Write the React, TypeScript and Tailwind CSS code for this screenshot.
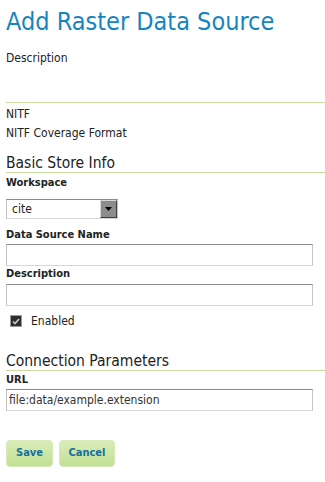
import React from "react";

const font = { fontFamily: '"DejaVu Sans Condensed", "DejaVu Sans", sans-serif' };

function Label({ children }: { children: React.ReactNode }) {
  return <div className="text-[11px] font-bold text-[#222] leading-[14px]">{children}</div>;
}

function TextInput({ value }: { value?: string }) {
  return (
    <div className="h-[22px] w-[307px] border border-t-[#8a8a8a] border-l-[#c4c4c4] border-r-[#c4c4c4] border-b-[#d6d6d6] bg-white px-[2px] flex items-center text-[12px] text-[#333]">
      {value}
    </div>
  );
}

function Section({ title }: { title: string }) {
  return (
    <div className="border-b border-[#c7dea0] text-[15.5px] leading-[18px] text-[#222]">{title}</div>
  );
}

export default function App() {
  return (
    <div className="w-[325px] h-[482px] bg-white overflow-hidden" style={font}>
      <div className="pl-[6px]">
        <h1 className="text-[25px] leading-[30px] text-[#1585bf] pt-[7px]">Add Raster Data Source</h1>
        <div className="text-[12px] leading-[14px] text-[#222] mt-[14px]">Description</div>
        <div className="mt-[37px] border-b border-[#c7dea0]" />
        <div className="mt-[2px] text-[12px] leading-[19px] text-[#222]">
          <div>NITF</div>
          <div>NITF Coverage Format</div>
        </div>
        <div className="mt-[11px]">
          <Section title="Basic Store Info" />
        </div>
        <div className="mt-[3px]">
          <Label>Workspace</Label>
        </div>
        <div className="mt-[9px] h-[20px] w-[112px] border border-t-[#8a8a8a] border-l-[#c4c4c4] border-r-[#c4c4c4] border-b-[#d6d6d6] bg-white flex items-center justify-between">
          <span className="pl-[5px] text-[12px] text-[#222]">cite</span>
          <span className="h-[18px] w-[17px] bg-[#8c8c8c] border border-t-[#d8d8d8] border-l-[#d8d8d8] border-r-[#404040] border-b-[#404040] flex items-center justify-center">
            <svg width="7" height="4" viewBox="0 0 7 4"><path d="M0 0h7L3.5 4z" fill="#000" /></svg>
          </span>
        </div>
        <div className="mt-[9px]">
          <Label>Data Source Name</Label>
        </div>
        <div className="mt-[2px]">
          <TextInput />
        </div>
        <div className="mt-[1px]">
          <Label>Description</Label>
        </div>
        <div className="mt-[3px]">
          <TextInput />
        </div>
        <div className="mt-[8px] h-[14px] flex items-center">
          <span className="ml-[4px] h-[12px] w-[12px] bg-[#2e2e2e] border border-[#9a9a9a] flex items-center justify-center">
            <svg width="8" height="7" viewBox="0 0 8 7"><path d="M1 3.5l2 2L7 1" stroke="#c8c8c8" strokeWidth="1.6" fill="none" /></svg>
          </span>
          <span className="ml-[9px] text-[12px] text-[#222]">Enabled</span>
        </div>
        <div className="mt-[24px]">
          <Section title="Connection Parameters" />
        </div>
        <div className="mt-[2px]">
          <Label>URL</Label>
        </div>
        <div className="mt-[2px]">
          <TextInput value="file:data/example.extension" />
        </div>
        <div className="mt-[29px] flex gap-[6px]">
          <button className="h-[27px] w-[47px] rounded-[4px] border border-[#d5e8b5] bg-gradient-to-b from-[#d9edb8] to-[#c2df93] text-[11px] font-bold text-[#136f9e]">Save</button>
          <button className="h-[27px] w-[56px] rounded-[4px] border border-[#d5e8b5] bg-gradient-to-b from-[#d9edb8] to-[#c2df93] text-[11px] font-bold text-[#136f9e]">Cancel</button>
        </div>
      </div>
    </div>
  );
}
